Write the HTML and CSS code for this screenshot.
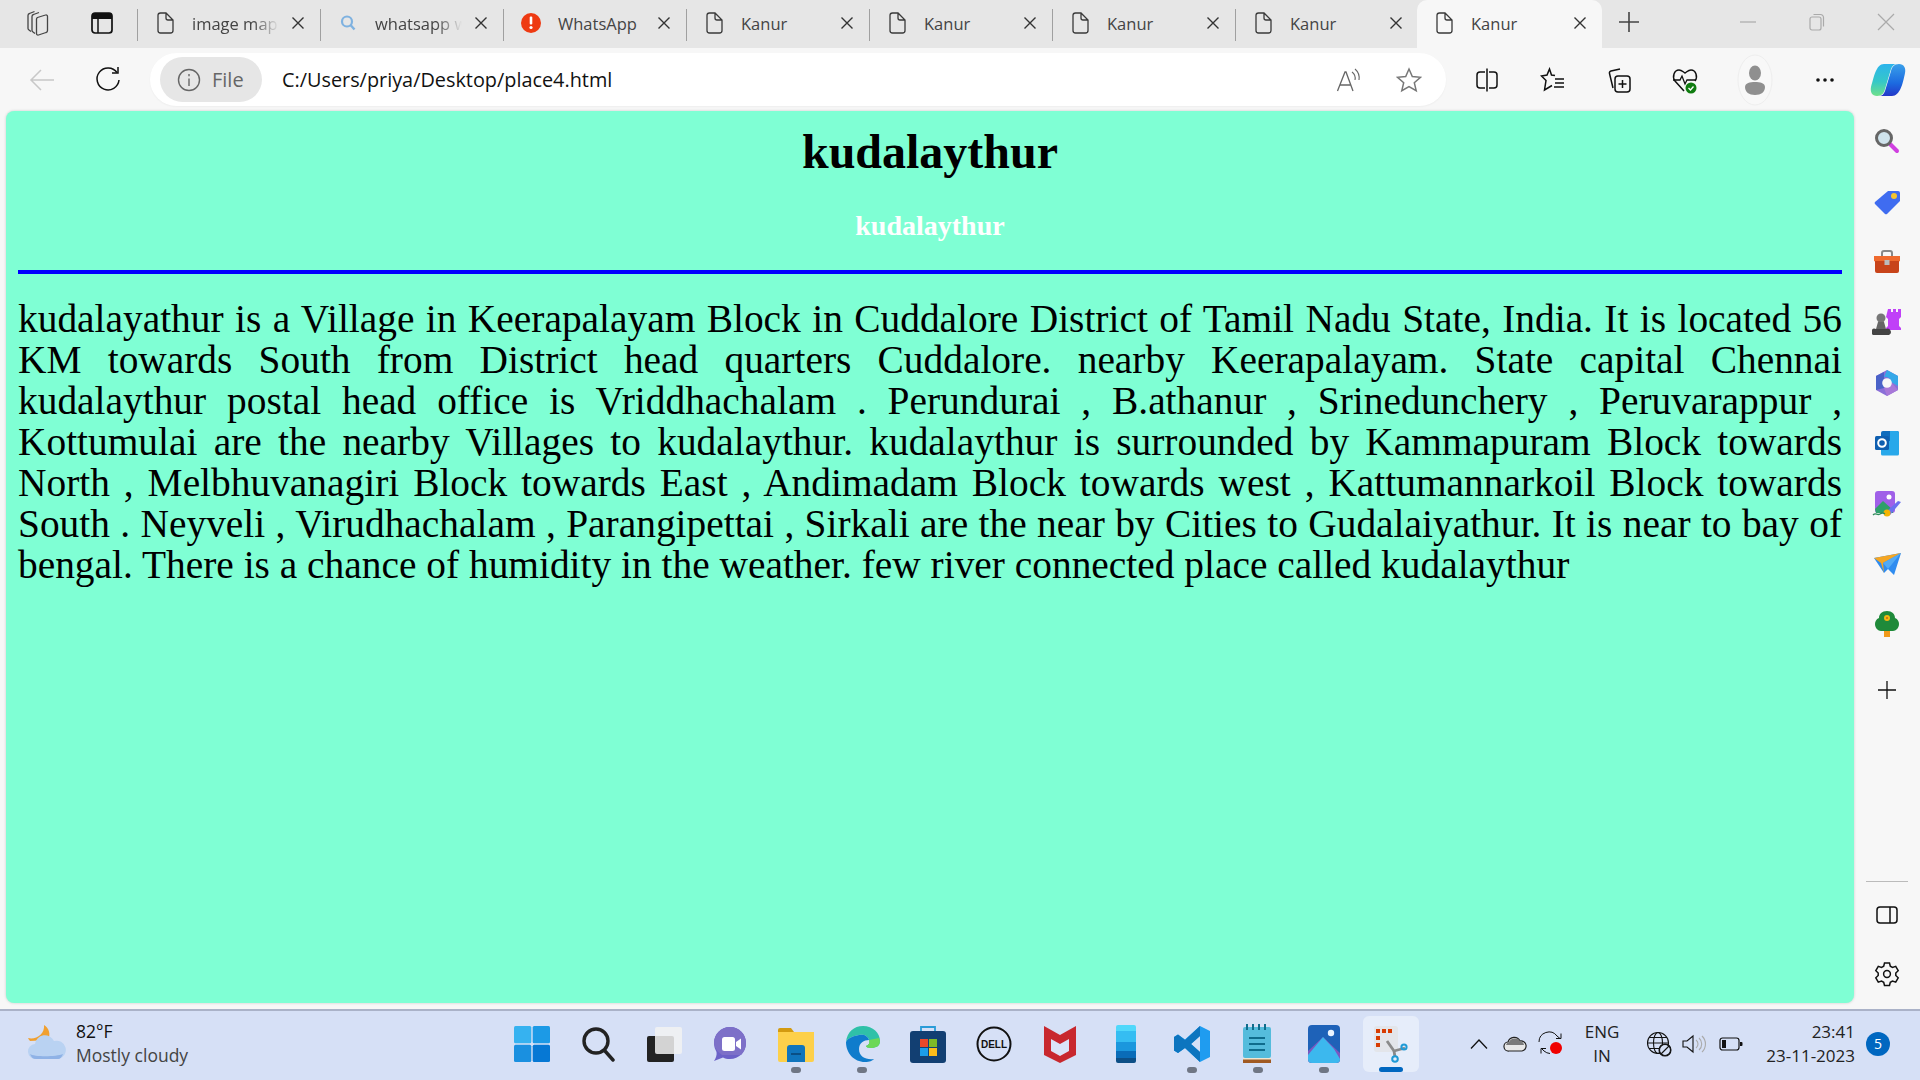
FILE: index.html
```html
<!DOCTYPE html>
<html>
<head>
    <title>Kanur</title>
    <link rel="stylesheet" href="styles.css">
</head>
<body>
    <svg class="sprite" width="0" height="0">
        <symbol id="doc" viewBox="0 0 20 24"><path d="M3 4.500A2.500 2.500 0 0 1 5.500 2H11l7 7v10.500a2.500 2.500 0 0 1-2.500 2.500h-10A2.500 2.500 0 0 1 3 19.500Z M11 2v5a2 2 0 0 0 2 2h5" fill="none" stroke="#3a3a3a" stroke-width="1.300"/></symbol>
        <symbol id="x" viewBox="0 0 14 14"><path d="M1.500 1.500l11 11M12.500 1.500l-11 11" stroke="#333" stroke-width="1.400"/></symbol>
        <linearGradient id="copilot-a" x1="0" y1="0" x2="0" y2="1"><stop offset="0" stop-color="#2cb4ec"/><stop offset=".55" stop-color="#35c8c8"/><stop offset="1" stop-color="#6fe08a"/></linearGradient>
        <linearGradient id="copilot-b" x1="0" y1="0" x2="0" y2="1"><stop offset="0" stop-color="#3aa0ea"/><stop offset=".6" stop-color="#1c6ae0"/><stop offset="1" stop-color="#2438c8"/></linearGradient>
    </svg>

    <!-- Tab strip -->
    <div class="tabstrip">
        <div class="strip-btn">
            <svg width="28" height="28" viewBox="0 0 28 28" fill="none" stroke="#444" stroke-width="1.300"><path d="M13.500 8.500l8-2.500a1.500 1.500 0 0 1 2 1.500v14a2 2 0 0 1-1.500 2l-7.500 2.500a1.500 1.500 0 0 1-2-1.500V10a2 2 0 0 1 1-1.500Z"/><path d="M15 3.500L9.500 5.500a2 2 0 0 0-1.500 2v14a2 2 0 0 0 1 1.500l2 1.500"/><path d="M10.500 2.500L5.500 4.500a2 2 0 0 0-1.500 2v13a2 2 0 0 0 1 1.500l2 1.500"/></svg>
        </div>
        <div class="strip-btn narrow">
            <svg width="24" height="24" viewBox="0 0 24 24"><rect x="2" y="2" width="20" height="20" rx="3" fill="none" stroke="#111" stroke-width="1.700"/><path d="M2 5a3 3 0 0 1 3-3h14a3 3 0 0 1 3 3v3H2Z" fill="#111"/><path d="M8 8v14" stroke="#111" stroke-width="1.500"/></svg>
        </div>
        <div class="tab">
            <svg class="tab-icon"><use href="#doc"/></svg>
            <span class="tab-title fade">image map</span>
            <svg class="tab-close"><use href="#x"/></svg>
        </div>
        <div class="tab">
            <svg class="tab-icon" viewBox="0 0 20 24"><circle cx="9" cy="10.500" r="5" fill="none" stroke="#7fb2e0" stroke-width="2.200"/><path d="M12.500 14l4 4.500" stroke="#7fb2e0" stroke-width="2.400"/></svg>
            <span class="tab-title fade">whatsapp w</span>
            <svg class="tab-close"><use href="#x"/></svg>
        </div>
        <div class="tab">
            <svg class="tab-icon" viewBox="0 0 20 24"><circle cx="10" cy="12" r="10" fill="#ee3a12"/><rect x="8.700" y="5.500" width="2.600" height="8" rx="1" fill="#fff"/><circle cx="10" cy="16.500" r="1.600" fill="#fff"/></svg>
            <span class="tab-title">WhatsApp</span>
            <svg class="tab-close"><use href="#x"/></svg>
        </div>
        <div class="tab">
            <svg class="tab-icon"><use href="#doc"/></svg>
            <span class="tab-title">Kanur</span>
            <svg class="tab-close"><use href="#x"/></svg>
        </div>
        <div class="tab">
            <svg class="tab-icon"><use href="#doc"/></svg>
            <span class="tab-title">Kanur</span>
            <svg class="tab-close"><use href="#x"/></svg>
        </div>
        <div class="tab">
            <svg class="tab-icon"><use href="#doc"/></svg>
            <span class="tab-title">Kanur</span>
            <svg class="tab-close"><use href="#x"/></svg>
        </div>
        <div class="tab">
            <svg class="tab-icon"><use href="#doc"/></svg>
            <span class="tab-title">Kanur</span>
            <svg class="tab-close"><use href="#x"/></svg>
        </div>
        <div class="tab active">
            <svg class="tab-icon"><use href="#doc"/></svg>
            <span class="tab-title">Kanur</span>
            <svg class="tab-close"><use href="#x"/></svg>
        </div>
        <div class="new-tab">
            <svg width="24" height="24" viewBox="0 0 24 24"><path d="M12 2v20M2 12h20" stroke="#444" stroke-width="1.600"/></svg>
        </div>
        <div class="window-btns">
            <svg width="18" height="18" viewBox="0 0 18 18"><path d="M1 9h16" stroke="#aaa" stroke-width="1.200"/></svg>
            <svg width="18" height="18" viewBox="0 0 18 18" fill="none" stroke="#aaa" stroke-width="1.200"><rect x="2" y="4" width="11" height="13" rx="2"/><path d="M5.500 1.500h7a3 3 0 0 1 3 3v9"/></svg>
            <svg width="18" height="18" viewBox="0 0 18 18"><path d="M1 1l16 16M17 1L1 17" stroke="#aaa" stroke-width="1.200"/></svg>
        </div>
    </div>

    <!-- Toolbar -->
    <div class="toolbar">
        <div class="tool back">
            <svg width="26" height="26" viewBox="0 0 26 26" fill="none" stroke="#c8c8c8" stroke-width="1.500"><path d="M25 13H2M12 3L2 13l10 10"/></svg>
        </div>
        <div class="tool">
            <svg width="26" height="28" viewBox="0 0 26 28" fill="none" stroke="#111" stroke-width="1.500"><path d="M22 6.500A11 11 0 1 0 24 14"/><path d="M23 1v6h-6"/></svg>
        </div>
        <div class="address">
            <div class="file-pill">
                <svg width="24" height="24" viewBox="0 0 24 24" fill="none" stroke="#666" stroke-width="1.400"><circle cx="12" cy="12" r="10.500"/><path d="M12 10.500V18M12 6v2.200"/></svg>
                <span>File</span>
            </div>
            <span class="url">C:/Users/priya/Desktop/place4.html</span>
            <div class="address-icons">
                <svg width="26" height="26" viewBox="0 0 26 26" fill="none" stroke="#666" stroke-width="1.300"><path d="M1.500 24L9 5h1l7 19M4 18h11"/><path d="M16 5a8 8 0 0 1 3 8M19 2a12 12 0 0 1 4 11" stroke-width="1.100"/></svg>
                <svg width="26" height="26" viewBox="0 0 26 26" fill="none" stroke="#777" stroke-width="1.500"><path d="M13 2l3.300 7.500 8.200.8-6.200 5.400 1.900 8L13 19.500l-7.200 4.200 1.900-8L1.500 10.300l8.200-.8Z"/></svg>
            </div>
        </div>
        <div class="tool">
            <svg width="24" height="26" viewBox="0 0 24 26" fill="none" stroke="#111" stroke-width="1.500"><path d="M10 5H5a3 3 0 0 0-3 3v10a3 3 0 0 0 3 3h5M14 5h5a3 3 0 0 1 3 3v10a3 3 0 0 1-3 3h-5M12 1.500v23"/></svg>
        </div>
        <div class="tool">
            <svg width="26" height="26" viewBox="0 0 26 26" fill="none" stroke="#111" stroke-width="1.500"><path d="M15 8.500L11.500 8 9.500 2 7 8l-5.500 1L6 13.500 4.500 23l7.500-4.500"/><path d="M15 12h9M15 16h9M14 20h10"/></svg>
        </div>
        <div class="tool">
            <svg width="26" height="28" viewBox="0 0 26 28" fill="none" stroke="#111" stroke-width="1.500"><path d="M14 3l-9 2a2 2 0 0 0-1.500 2.500L7 22"/><rect x="9" y="10" width="15" height="16" rx="3"/><path d="M16.500 14v8M12.500 18h8"/></svg>
        </div>
        <div class="tool">
            <svg width="28" height="30" viewBox="0 0 28 30"><path d="M13 26L4 16C1 12 3 5 8 5c3 0 4 2 6 3 2-1 3-3 6-3 5 0 7 7 4 11" fill="none" stroke="#111" stroke-width="1.500"/><path d="M2 15h7l2-4 3 8 2-4h9" fill="none" stroke="#111" stroke-width="1.300"/><circle cx="20" cy="23" r="5.500" fill="#107c10"/><path d="M17.500 23l2 2 3-3.500" fill="none" stroke="#fff" stroke-width="1.300"/></svg>
        </div>
        <div class="tool profile">
            <svg width="36" height="52" viewBox="0 0 36 52"><ellipse cx="18" cy="26" rx="17" ry="25" fill="#f8f8f8" stroke="#eee"/><ellipse cx="18" cy="19" rx="6" ry="7.500" fill="#8f8f8f"/><path d="M8 33c0-4 5-5 10-5s10 1 10 5c0 5-4 8-10 8s-10-3-10-8Z" fill="#8f8f8f"/></svg>
        </div>
        <div class="tool more">
            <svg width="20" height="6" viewBox="0 0 20 6" fill="#111"><circle cx="3" cy="3" r="1.800"/><circle cx="10" cy="3" r="1.800"/><circle cx="17" cy="3" r="1.800"/></svg>
        </div>
        <div class="tool copilot">
            <svg width="36" height="34" viewBox="0 0 36 34">
                <path d="M22 33H9c3 0 5-2 6-5l6-20c1-4 3-7 8-7 5 0 7 4 6 9-2 10-5 23-13 23Z" fill="url(#copilot-b)"/>
                <path d="M14 1h13c-3 0-5 2-6 5l-6 20c-1 4-3 7-8 7-5 0-7-4-6-9C4 14 6 1 14 1Z" fill="url(#copilot-a)"/>
            </svg>
        </div>
    </div>

    <div class="main">
        <!-- Page content -->
        <div class="page">
            <h1>kudalaythur</h1>
            <h2>kudalaythur</h2>
            <div class="rule"></div>
            <p>
                <span class="line">kudalayathur is a Village in Keerapalayam Block in Cuddalore District of Tamil Nadu State, India. It is located 56</span>
                <span class="line">KM towards South from District head quarters Cuddalore. nearby Keerapalayam. State capital Chennai</span>
                <span class="line">kudalaythur postal head office is Vriddhachalam . Perundurai , B.athanur , Srinedunchery , Peruvarappur ,</span>
                <span class="line">Kottumulai are the nearby Villages to kudalaythur. kudalaythur is surrounded by Kammapuram Block towards</span>
                <span class="line">North , Melbhuvanagiri Block towards East , Andimadam Block towards west , Kattumannarkoil Block towards</span>
                <span class="line">South . Neyveli , Virudhachalam , Parangipettai , Sirkali are the near by Cities to Gudalaiyathur. It is near to bay of</span>
                <span class="line end">bengal. There is a chance of humidity in the weather. few river connected place called kudalaythur</span>
            </p>
        </div>

        <!-- Edge sidebar -->
        <div class="sidebar">
            <div class="side-icon">
                <svg width="26" height="26" viewBox="0 0 26 26"><path d="M15 15l8 8" stroke="#d040e0" stroke-width="4" stroke-linecap="round"/><circle cx="10" cy="10" r="7.500" fill="#cfe3ec" stroke="#666" stroke-width="3"/></svg>
            </div>
            <div class="side-icon">
                <svg width="28" height="28" viewBox="0 0 28 28"><path d="M2 14L15 3h10a2 2 0 0 1 2 2v8L14 26a2 2 0 0 1-2 0L2 16a1.500 1.500 0 0 1 0-2Z" fill="#3f6cf0"/><circle cx="21" cy="8" r="3" fill="#f4c430"/></svg>
            </div>
            <div class="side-icon">
                <svg width="28" height="26" viewBox="0 0 28 26"><path d="M9 7V4a2 2 0 0 1 2-2h6a2 2 0 0 1 2 2v3" fill="none" stroke="#888" stroke-width="2"/><path d="M1 7h26v5l-2 1H3l-2-1Z" fill="#ef6a2e"/><path d="M2 12h24v10a2 2 0 0 1-2 2H4a2 2 0 0 1-2-2Z" fill="#c8441a"/><rect x="11.500" y="11" width="5" height="5" fill="#bbb"/></svg>
            </div>
            <div class="side-icon">
                <svg width="30" height="28" viewBox="0 0 30 28"><path d="M17 1h3v3h2V1h3v3h2V1h3v8l-2 2v7l2 2v2H15v-2l2-2v-7l-2-2Z" fill="#c040f8" transform="translate(-1 0)"/><circle cx="9" cy="10" r="4.500" fill="#777"/><path d="M6 14h6l2 7H4Z" fill="#666"/><path d="M1 27a3 3 0 0 1 3-6h10a3 3 0 0 1 3 6Z" fill="#444"/></svg>
            </div>
            <div class="side-icon">
                <svg width="26" height="28" viewBox="0 0 26 28"><path d="M13 1l11 6v14l-11 6-11-6V7Z" fill="#8a6fd8"/><path d="M13 1l11 6v10l-7-4c0-3-2-5-7-5Z" fill="#35a8e8"/><path d="M2 7l8-4v16l-8 2Z" fill="#4a62c8"/><path d="M10 19l7-6 7 8-11 6Z" fill="#a878d8"/><circle cx="13" cy="14" r="4.800" fill="#f7f7f7"/></svg>
            </div>
            <div class="side-icon">
                <svg width="26" height="26" viewBox="0 0 26 26"><path d="M9 1h14a2 2 0 0 1 2 2v8H7V3a2 2 0 0 1 2-2Z" fill="#0f6cbd"/><path d="M7 11h18v13a1.500 1.500 0 0 1-1.500 1.500H8.500A1.500 1.500 0 0 1 7 24Z" fill="#28a8ea"/><path d="M16 1h7a2 2 0 0 1 2 2v8h-9Z" fill="#28a8ea"/><rect x="1" y="6" width="14" height="14" rx="1.500" fill="#0f5fb0"/><circle cx="8" cy="13" r="3.800" fill="none" stroke="#fff" stroke-width="2"/></svg>
            </div>
            <div class="side-icon">
                <svg width="30" height="28" viewBox="0 0 30 28"><rect x="3" y="1" width="20" height="22" rx="3" fill="#a060e8"/><circle cx="17" cy="7" r="2.500" fill="#fff"/><path d="M3 19l8-8 10 9v3H4Z" fill="#2fa06a"/><path d="M14 22l12-11 3 1-11 13Z" fill="#6a70f0"/><circle cx="15" cy="23" r="3.500" fill="#f4b400"/><path d="M1 25c3-3 4 1 7-1s3-1 5 0" fill="none" stroke="#2f8a5a" stroke-width="1.300"/></svg>
            </div>
            <div class="side-icon">
                <svg width="28" height="24" viewBox="0 0 28 24"><path d="M1 6l27-5-7 22-6-6-4 4Z" fill="#2f8cf0"/><path d="M1 6l27-5L10 11l1 10-3-10Z" fill="#f5a623"/><path d="M10 11L28 1 15 17Z" fill="#52aaf5"/></svg>
            </div>
            <div class="side-icon">
                <svg width="26" height="28" viewBox="0 0 26 28"><rect x="10" y="19" width="6" height="8" fill="#f09a1a"/><path d="M13 1c5 0 8 3 8 7 3 1 4 4 4 6 0 4-3 7-6 7H7c-3 0-6-3-6-7 0-2 1-5 4-6 0-4 3-7 8-7Z" fill="#1f8a3a"/><circle cx="13" cy="8" r="3" fill="#f2b90f"/><circle cx="13" cy="8" r="1" fill="#c8641a"/></svg>
            </div>
            <div class="side-icon add">
                <svg width="20" height="20" viewBox="0 0 20 20"><path d="M10 1v18M1 10h18" stroke="#111" stroke-width="1.300"/></svg>
            </div>
            <div class="side-bottom">
                <div class="side-rule"></div>
                <div class="side-icon">
                    <svg width="22" height="18" viewBox="0 0 22 18" fill="none" stroke="#111" stroke-width="1.500"><rect x="1" y="1" width="20" height="16" rx="3"/><path d="M14 1v16"/></svg>
                </div>
                <div class="side-icon last">
                    <svg width="26" height="26" viewBox="0 0 26 26" fill="none" stroke="#111" stroke-width="1.500"><path d="M10.500 2h5l.8 3.200 2.200 1.200 3.200-1 2.500 4.300-2.400 2.300v2.500l2.400 2.300-2.500 4.300-3.200-1-2.200 1.200-.8 3.200h-5l-.8-3.200-2.200-1.200-3.200 1-2.500-4.300 2.400-2.300V12L1.800 9.700l2.500-4.300 3.200 1 2.200-1.200Z"/><circle cx="13" cy="13" r="3.400"/></svg>
                </div>
            </div>
        </div>
    </div>
    <div class="page-foot"></div>

    <!-- Windows taskbar -->
    <div class="taskbar">
        <div class="weather">
            <svg width="40" height="38" viewBox="0 0 40 38"><path d="M17 1c5 3 7 9 4 15L3 17c-1-1-2-3-2-3 8 2 17-4 16-13Z" fill="#f0a030"/><path d="M9 35a7.500 7.500 0 0 1-1-15 10 10 0 0 1 19-3 9 9 0 0 1 5 18Z" fill="#b9d2f2"/><path d="M3 30c4 3 26 3 33 0-1 3-3 5-5 5H9c-3 0-5-2-6-5Z" fill="#8fb2e6"/></svg>
            <div class="weather-text">
                <span class="temp">82°F</span>
                <span class="cond">Mostly cloudy</span>
            </div>
        </div>
        <div class="apps">
            <div class="app">
                <svg width="36" height="36" viewBox="0 0 36 36"><rect width="17.300" height="17.300" rx="1.500" fill="#36b2f0"/><rect x="18.700" width="17.300" height="17.300" rx="1.500" fill="#1c9ae6"/><rect y="18.700" width="17.300" height="17.300" rx="1.500" fill="#1a90e0"/><rect x="18.700" y="18.700" width="17.300" height="17.300" rx="1.500" fill="#0678d4"/></svg>
            </div>
            <div class="app">
                <svg width="34" height="36" viewBox="0 0 34 36" fill="none" stroke="#222" stroke-width="3.400"><circle cx="15" cy="15" r="12"/><path d="M24 25l8 9" stroke-linecap="round"/></svg>
            </div>
            <div class="app">
                <svg width="36" height="36" viewBox="0 0 36 36"><rect x="1" y="10" width="27" height="26" rx="2" fill="#222"/><rect x="9" y="1" width="27" height="27" rx="2" fill="#f2f2f2" opacity=".85"/></svg>
            </div>
            <div class="app">
                <svg width="36" height="38" viewBox="0 0 36 38"><path d="M18 2c9 0 16 7 16 16s-7 16-16 16c-3 0-5-.5-7-1.500L2 36c2-3 3-6 2.500-9A18 18 0 0 1 2 18C2 9 9 2 18 2Z" fill="#6c62c8"/><path d="M18 2c9 0 16 7 16 16 0 5-2 9-5 12H10C6 27 2 23 2 18 2 9 9 2 18 2Z" fill="#7d70c8"/><rect x="10" y="12" width="13" height="14" rx="2.500" fill="#fff"/><path d="M24 17l5-3.500v11L24 21Z" fill="#fff"/></svg>
            </div>
            <div class="app running">
                <svg width="36" height="36" viewBox="0 0 36 36"><path d="M0 4a2 2 0 0 1 2-2h11l3 4H0Z" fill="#d39a10"/><path d="M0 6h36v28a2 2 0 0 1-2 2H2a2 2 0 0 1-2-2Z" fill="#fdd04a"/><path d="M9 22a3 3 0 0 1 3-3h12a3 3 0 0 1 3 3v14H9Z" fill="#1075bd"/><rect x="13" y="27" width="10" height="2" fill="#0a4f85"/></svg>
            </div>
            <div class="app running">
                <svg width="36" height="38" viewBox="0 0 36 38"><path d="M2 17C3 7 10 1 19 1c10 0 17 7 17 15 0 5-4 7-9 7-3 0-5-1-5-2 3-1 4-3 3-6-1-4-5-6-10-5C9 11 4 13 2 17Z" fill="#2fc1a8"/><path d="M36 16c0 5-4 7-9 7-3 0-5-1-5-2 3-1 4-3 3-6l10-2Z" fill="#6cd857"/><path d="M2 17c0 11 8 20 19 20 5 0 7-1 9-3-8 1-15-2-15-10 0-6 5-9 10-9-1-4-5-6-10-5C9 11 4 13 2 17Z" fill="#0f7ccc"/></svg>
            </div>
            <div class="app">
                <svg width="36" height="38" viewBox="0 0 36 38"><path d="M11 8V2h14v6" fill="none" stroke="#2a9cd8" stroke-width="1.800"/><rect y="6" width="36" height="32" rx="3" fill="#123f72"/><rect x="10" y="14" width="8" height="8" fill="#e8482a"/><rect x="19" y="14" width="8" height="8" fill="#7db928"/><rect x="10" y="23" width="8" height="8" fill="#1c9de8"/><rect x="19" y="23" width="8" height="8" fill="#fbbb1a"/></svg>
            </div>
            <div class="app">
                <svg width="36" height="36" viewBox="0 0 36 36"><circle cx="18" cy="18" r="16.500" fill="none" stroke="#111" stroke-width="2"/><text x="18" y="22" class="dell">DELL</text></svg>
            </div>
            <div class="app">
                <svg width="32" height="38" viewBox="0 0 32 38"><path d="M0 1l16 9 16-9v29L16 38 0 30Z" fill="#c8282e"/><path d="M7 14l9 5 9-5v12l-9 5-9-5Z" fill="#dbe4f7"/></svg>
            </div>
            <div class="app">
                <svg width="20" height="38" viewBox="0 0 20 38"><path d="M2 0h16a2 2 0 0 1 2 2v4H0V2a2 2 0 0 1 2-2Z" fill="#50d8fb"/><rect y="6" width="20" height="11" fill="#35bdf2"/><rect y="17" width="20" height="9" fill="#1b97dd"/><rect y="26" width="20" height="7" fill="#0a6cb8"/><path d="M0 33h20v3a2 2 0 0 1-2 2H2a2 2 0 0 1-2-2Z" fill="#0d4f86"/></svg>
            </div>
            <div class="app running">
                <svg width="36" height="38" viewBox="0 0 36 38"><path d="M26 1l10 5v26l-10 5-15-14-7 5-4-2.500V12l4-2.500 7 5Zm0 10l-9 8 9 8Z" fill="#1f9cf0"/><path d="M26 1L11 15 4 9.500 0 12v13.500L4 28l7-5 15 14 0-10-9-8 9-8Z" fill="#0d75bf"/></svg>
            </div>
            <div class="app running">
                <svg width="30" height="40" viewBox="0 0 30 40"><rect y="3" width="28" height="31" rx="2" fill="#55bcdc"/><path d="M0 34h28v5H0Z" fill="#a05a22"/><path d="M0 34h28v1.500H0Z" fill="#efe6d2"/><path d="M4 0v6M10 0v6M16 0v6M22 0v6" stroke="#0f6c8c" stroke-width="2"/><path d="M6 14h16M6 20h16M6 26h16" stroke="#0f6c8c" stroke-width="2"/></svg>
            </div>
            <div class="app running">
                <svg width="32" height="38" viewBox="0 0 32 38"><rect width="32" height="38" rx="4" fill="#1e62b8"/><path d="M0 26l15-14 17 16v6a4 4 0 0 1-4 4H4a4 4 0 0 1-4-4Z" fill="#7a58c0"/><path d="M0 30l15-18 11 12 6 10a4 4 0 0 1-4 4H4a4 4 0 0 1-4-4Z" fill="#3cb8ee"/><circle cx="23" cy="8" r="3.200" fill="#eaf4ff"/></svg>
            </div>
            <div class="app active">
                <svg width="34" height="37" viewBox="0 0 34 37"><rect x="0" y="0" width="24" height="26" rx="3" fill="#e3e5ea"/><path d="M2 3h4v4H2ZM8 3h4v4H8ZM14 3h4v4h-4ZM2 10h4v4H2ZM2 17h4v4H2Z" fill="#d83b01"/><path d="M13 15l7 10 11-3" fill="none" stroke="#8a8a8a" stroke-width="2.800"/><circle cx="30" cy="21" r="2.600" fill="none" stroke="#1f9ad6" stroke-width="2"/><path d="M20 25l1 6" stroke="#8a8a8a" stroke-width="2.800"/><circle cx="21" cy="33" r="2.800" fill="none" stroke="#1f9ad6" stroke-width="2"/></svg>
            </div>
        </div>
        <div class="tray">
            <div class="tray-cell">
                <svg width="18" height="10" viewBox="0 0 18 10" fill="none" stroke="#111" stroke-width="1.300"><path d="M1 9.500L9 1l8 8.500"/></svg>
            </div>
            <div class="tray-cell">
                <svg width="24" height="16" viewBox="0 0 24 16"><path d="M6 15a4.500 4.500 0 0 1-1-9 6.500 6.500 0 0 1 12-1 5 5 0 0 1 2 10Z" fill="#e8e8e8" stroke="#222" stroke-width="1.200"/><path d="M3 9a4 4 0 0 1 3-3 6.500 6.500 0 0 1 11-1 5 5 0 0 1 4 4Z" fill="#7a7a7a"/></svg>
            </div>
            <div class="tray-cell">
                <svg width="26" height="26" viewBox="0 0 26 26" fill="none" stroke="#111" stroke-width="1"><path d="M1 11a10 10 0 0 1 18-6l3 2.500M23 2.500v5h-5M3 17l3 3a10 10 0 0 0 6 2.500M3 22.500v-5h5"/><circle cx="18" cy="17" r="6" fill="#f00000" stroke="none"/></svg>
            </div>
            <div class="lang">ENG<br>IN</div>
            <div class="tray-cell">
                <svg width="26" height="26" viewBox="0 0 26 26" fill="none" stroke="#111" stroke-width="1.100"><circle cx="12" cy="12" r="10.500"/><ellipse cx="12" cy="12" rx="4.500" ry="10.500"/><path d="M1.500 12h21M3 6.500h18M3 17.500h10"/><circle cx="19" cy="19" r="6" fill="#d6e0f6"/><path d="M15 23l8-8" /><circle cx="19" cy="19" r="5.500"/></svg>
            </div>
            <div class="tray-cell">
                <svg width="26" height="20" viewBox="0 0 26 20" fill="none" stroke="#111" stroke-width="1.100"><path d="M1 7v6h4l6 5V2L5 7Z"/><path d="M14 6a5 5 0 0 1 0 8M17 4a8 8 0 0 1 0 12M20 2a11 11 0 0 1 0 16" stroke="#aaa"/></svg>
            </div>
            <div class="tray-cell">
                <svg width="24" height="14" viewBox="0 0 24 14"><rect x="1" y="1" width="19" height="12" rx="2.500" fill="none" stroke="#111" stroke-width="1.200"/><rect x="3" y="3" width="4" height="8" fill="#111"/><path d="M21 5h1.500a1 1 0 0 1 1 1v2a1 1 0 0 1-1 1H21Z" fill="#111"/></svg>
            </div>
            <div class="clock">23:41<br>23-11-2023</div>
            <div class="badge">5</div>
        </div>
    </div>
</body>
</html>
```

FILE: styles.css
```css
html, body {
    margin: 0;
    padding: 0;
}
body {
    width: 1920px;
    height: 1080px;
    overflow: hidden;
    display: flex;
    flex-direction: column;
    background-color: #f7f7f7;
    font-family: "Open Sans", "Noto Sans", sans-serif;
}
.sprite {
    position: absolute;
}

/* tab strip */
.tabstrip {
    height: 48px;
    flex-shrink: 0;
    display: flex;
    background-color: #e6e6e6;
    padding-left: 5px;
}
.strip-btn {
    width: 66px;
    display: flex;
    align-items: center;
    justify-content: center;
    padding-bottom: 2px;
}
.strip-btn.narrow {
    margin-left: -2px;
    margin-right: 2px;
}
.tab {
    width: 183px;
    height: 48px;
    box-sizing: border-box;
    display: flex;
    align-items: center;
    padding: 0 15px 2px 17px;
    font-size: 16.500px;
    color: #444;
    border-left: 1px solid #a0a0a0;
    border-image: linear-gradient(#e6e6e6 10px, #a0a0a0 10px, #a0a0a0 40px, #e6e6e6 40px) 1;
}
.tab.active {
    background-color: #f7f7f7;
    border: 0;
    border-radius: 10px 10px 0 0;
    margin-left: -1px;
    width: 185px;
}
.tab-icon {
    width: 20px;
    height: 24px;
    flex-shrink: 0;
}
.tab-title {
    margin-left: 17px;
    width: 90px;
    white-space: nowrap;
    overflow: hidden;
}
.tab-title.fade {
    -webkit-mask-image: linear-gradient(90deg, #000 70%, transparent);
    mask-image: linear-gradient(90deg, #000 70%, transparent);
    width: 87px;
}
.tab-close {
    width: 14px;
    height: 14px;
    margin-left: auto;
    flex-shrink: 0;
}
.new-tab {
    width: 54px;
    display: flex;
    align-items: center;
    justify-content: center;
    padding-bottom: 4px;
}
.window-btns {
    display: flex;
    align-items: center;
    margin-left: auto;
    gap: 51px;
    padding: 0 25px 4px 0;
}

/* toolbar */
.toolbar {
    height: 63px;
    flex-shrink: 0;
    display: flex;
    align-items: center;
    padding-left: 9px;
    box-sizing: border-box;
}
.tool {
    width: 66px;
    height: 52px;
    flex-shrink: 0;
    display: flex;
    align-items: center;
    justify-content: center;
}
.address {
    width: 1296px;
    height: 53px;
    margin: 0 8px 0 9px;
    box-sizing: border-box;
    background-color: #fff;
    border-radius: 27px;
    display: flex;
    align-items: center;
    padding-left: 10px;
    box-shadow: 0 1px 2px rgba(0, 0, 0, 0.04);
}
.file-pill {
    width: 102px;
    height: 45px;
    box-sizing: border-box;
    background-color: #e6e6e6;
    border-radius: 23px;
    display: flex;
    align-items: center;
    padding-left: 17px;
    gap: 11px;
    color: #666;
    font-size: 20px;
}
.url {
    margin-left: 20px;
    font-size: 19.850px;
    color: #111;
}
.address-icons {
    margin-left: auto;
    display: flex;
    gap: 34px;
    padding-right: 24px;
}
.profile {
    width: 70px;
    margin-left: 2px;
}
.more {
    width: 70px;
}
.copilot {
    width: 56px;
}

/* main area */
.main {
    height: 892px;
    flex-shrink: 0;
    display: flex;
    padding-left: 6px;
}
.page {
    width: 1848px;
    box-sizing: border-box;
    background-color: #7fffd4;
    border-radius: 8px;
    padding: 13px 12px 0;
    font-family: "Liberation Serif", "Times New Roman", serif;
    box-shadow: 0 0 3px rgba(0, 0, 0, 0.18);
}
.page h1 {
    margin: 0;
    font-size: 48px;
    text-align: center;
    color: #000;
}
.page h2 {
    margin: 31px 0 0;
    font-size: 28px;
    text-align: center;
    color: #fff;
}
.rule {
    height: 4px;
    background-color: #0000ff;
    margin-top: 28px;
}
.page p {
    margin: 25px 0 0;
    font-size: 39.400px;
    line-height: 41px;
    color: #000;
}
.line {
    display: block;
    text-align: justify;
    text-align-last: justify;
}
.line.end {
    text-align-last: left;
}

/* sidebar */
.sidebar {
    flex: 1;
    display: flex;
    flex-direction: column;
    align-items: center;
}
.side-icon {
    height: 60.400px;
    width: 100%;
    flex-shrink: 0;
    display: flex;
    align-items: center;
    justify-content: center;
}
.side-icon.add {
    margin-top: 5px;
}
.side-icon.last {
    height: 58px;
}
.side-bottom {
    margin-top: auto;
    width: 100%;
}
.side-rule {
    width: 42px;
    height: 1px;
    background-color: #bbb;
    margin: 0 auto 3px;
}

.page-foot {
    height: 6px;
    flex-shrink: 0;
}

/* taskbar */
.taskbar {
    height: 71px;
    flex-shrink: 0;
    box-sizing: border-box;
    border-top: 2px solid #aab2c8;
    background-color: #d6e0f6;
    display: flex;
}
.weather {
    width: 499px;
    flex-shrink: 0;
    box-sizing: border-box;
    padding: 0 0 5px 27px;
    display: flex;
    align-items: center;
    gap: 9px;
}
.weather-text {
    display: flex;
    flex-direction: column;
    font-size: 17.500px;
    line-height: 24px;
    color: #111;
}
.cond {
    color: #444;
}
.apps {
    display: flex;
    width: 923px;
    flex-shrink: 0;
}
.app {
    width: 66px;
    height: 69px;
    flex-shrink: 0;
    box-sizing: border-box;
    display: flex;
    align-items: center;
    justify-content: center;
    position: relative;
    padding-bottom: 4px;
}
.app.running::after {
    content: "";
    position: absolute;
    bottom: 7px;
    left: 28px;
    width: 10px;
    height: 6px;
    border-radius: 3px;
    background-color: #6f7684;
}
.app.active {
    width: 56px;
    height: 56px;
    margin: 5px 0 0 6px;
    padding-bottom: 0;
    background-color: #e6edfa;
    border-radius: 6px;
}
.app.active::after {
    content: "";
    position: absolute;
    bottom: 0;
    left: 16px;
    width: 24px;
    height: 5px;
    border-radius: 3px;
    background-color: #0067c0;
}
.dell {
    font-family: "Liberation Sans", Arial, sans-serif;
    font-size: 10px;
    font-weight: 700;
    text-anchor: middle;
    fill: #111;
}
.tray {
    flex: 1;
    display: flex;
    align-items: center;
    color: #222;
    box-sizing: border-box;
    padding: 0 0 4px 39px;
}
.tray-cell {
    width: 36px;
    flex-shrink: 0;
    display: flex;
    justify-content: center;
}
.lang {
    width: 66px;
    margin-right: 6px;
    flex-shrink: 0;
    text-align: center;
    font-size: 17px;
    line-height: 24px;
}
.clock {
    width: 106px;
    flex-shrink: 0;
    text-align: right;
    font-size: 17px;
    line-height: 24px;
}
.badge {
    width: 24px;
    height: 24px;
    margin-left: 11px;
    flex-shrink: 0;
    border-radius: 50%;
    background-color: #0067c0;
    color: #fff;
    font-size: 14px;
    display: flex;
    align-items: center;
    justify-content: center;
}
```
